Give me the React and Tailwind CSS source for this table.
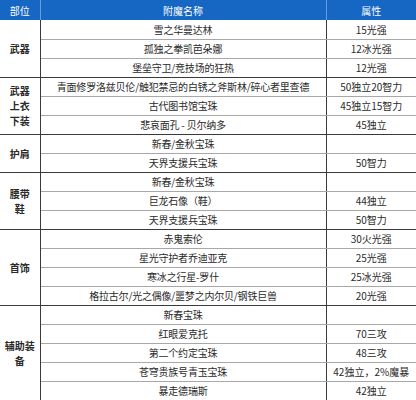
import React from "react";

const groups = [
  {
    part: ["武器"],
    rows: [
      ["雪之华曼达林", "15光强"],
      ["孤独之拳凯芭朵娜", "12冰光强"],
      ["堡垒守卫/竞技场的狂热", "12光强"],
    ],
  },
  {
    part: ["武器", "上衣", "下装"],
    rows: [
      ["青面修罗洛兹贝伦/触犯禁忌的白锈之斧斯林/碎心者里查德", "50独立20智力"],
      ["古代图书馆宝珠", "45独立15智力"],
      ["悲哀面孔 - 贝尔纳多", "45独立"],
    ],
  },
  {
    part: ["护肩"],
    rows: [
      ["新春/金秋宝珠", ""],
      ["天界支援兵宝珠", "50智力"],
    ],
  },
  {
    part: ["腰带", "鞋"],
    rows: [
      ["新春/金秋宝珠", ""],
      ["巨龙石像（鞋）", "44独立"],
      ["天界支援兵宝珠", "50智力"],
    ],
  },
  {
    part: ["首饰"],
    rows: [
      ["赤鬼索伦", "30火光强"],
      ["星光守护者乔迪亚克", "25光强"],
      ["寒冰之行星-罗什", "25冰光强"],
      ["格拉古尔/光之偶像/噩梦之内尔贝/钢铁巨兽", "20光强"],
    ],
  },
  {
    part: ["辅助装", "备"],
    rows: [
      ["新春宝珠", ""],
      ["红眼爱克托", "70三攻"],
      ["第二个约定宝珠", "48三攻"],
      ["苍穹贵族号青玉宝珠", "42独立，2%魔暴"],
      ["暴走德瑞斯", "42独立"],
    ],
  },
];

export default function App() {
  return (
    <div
      className="w-[416px] h-[400px] overflow-hidden bg-white text-[#2a2a2a]"
      style={{ fontFamily: '"Noto Sans CJK SC", "Noto Sans", sans-serif' }}
    >
      <table className="w-[416px] table-fixed border-collapse text-[10px] leading-[13px]">
        <colgroup>
          <col className="w-[40px]" />
          <col className="w-[286px]" />
          <col className="w-[90px]" />
        </colgroup>
        <thead>
          <tr className="h-[20px] bg-[#1666c3] text-white">
            <th className="font-normal border-r border-[#6f9ad6]">部位</th>
            <th className="font-normal border-r border-[#6f9ad6]">附魔名称</th>
            <th className="font-normal">属性</th>
          </tr>
        </thead>
        <tbody>
          {groups.map((g, gi) =>
            g.rows.map((r, ri) => {
              const last = ri === g.rows.length - 1;
              const bottom = last ? "border-b border-b-[#3a3a3a]" : "border-b border-b-[#a8a8a8]";
              return (
                <tr key={gi + "-" + ri} className="h-[19px]">
                  {ri === 0 && (
                    <td
                      rowSpan={g.rows.length}
                      className="border-r border-r-[#3a3a3a] border-b border-b-[#3a3a3a] text-center font-bold leading-[15px]"
                    >
                      {g.part.map((p, pi) => (
                        <div key={pi}>{p}</div>
                      ))}
                    </td>
                  )}
                  <td className={"text-center whitespace-nowrap tracking-[-0.2px] border-r border-r-[#3a3a3a] " + bottom}>
                    {r[0]}
                  </td>
                  <td className={"text-center whitespace-nowrap " + bottom}>{r[1]}</td>
                </tr>
              );
            })
          )}
        </tbody>
      </table>
    </div>
  );
}
